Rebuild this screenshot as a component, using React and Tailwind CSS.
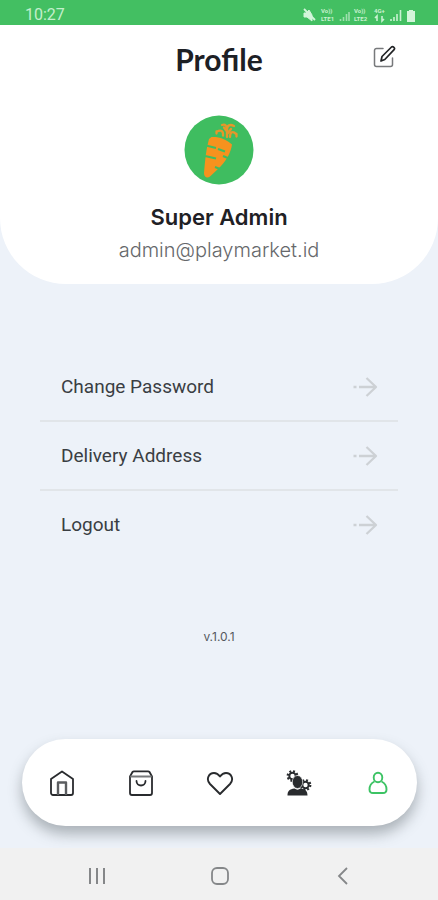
import React from "react";

function StatusIcons() {
  return (
    <svg className="h-5 w-[120px]" viewBox="0 0 120 20" fill="none" aria-hidden="true">
      <path d="M7 7l-3 3H2v4h3l5 4v-6z" fill="#d3f5da" stroke="#d3f5da" />
      <path d="M2 6l11 11" stroke="#d3f5da" strokeWidth="1.800" />
      <g fill="#c9f1d1" fontFamily="Roboto, sans-serif" fontSize="6" fontWeight="700">
        <text x="19" y="10">Vo))</text>
        <text x="19" y="18">LTE1</text>
        <text x="52" y="10">Vo))</text>
        <text x="52" y="18">LTE2</text>
        <text x="72" y="10">4G+</text>
      </g>
      <path d="M38.500 18v-2M41.500 18v-4M44.500 18v-7M47 18V9" stroke="#9fdfae" strokeWidth="1.600" />
      <path d="M75 18v-5l-2 2M80 13v5l2-2" stroke="#c9f2d2" strokeWidth="1.600" />
      <path d="M89 18v-2M92 18v-4M95 18v-7M98.500 18V7" stroke="#c9f2d2" strokeWidth="1.600" />
      <path d="M105 8h2V7h4v1h2v11h-8z" fill="#d3f5da" />
    </svg>
  );
}

function EditIcon() {
  return (
    <svg className="size-6" viewBox="0 0 24 24" fill="none" strokeLinecap="round" strokeLinejoin="round" aria-hidden="true">
      <path d="M11 3.500H4.500a2 2 0 0 0-2 2v14a2 2 0 0 0 2 2h14a2 2 0 0 0 2-2V13" stroke="#77797b" strokeWidth="1.500" />
      <path d="M9 16l1-4.500 9.500-9.500c1.500-1.200 4 1 2.600 2.700L12.800 14.500z" stroke="#222426" strokeWidth="1.700" />
    </svg>
  );
}

function Carrot() {
  return (
    <svg className="size-[70px]" viewBox="0 0 70 70" role="img" aria-label="Carrot">
      <circle cx="35" cy="35" r="34.500" fill="#3fbd60" />
      <path d="M27.500 22C35 21.500 42 24 48 29.500C47 38 41 48 34 54L26 61.500C23 64 20 62 20 58C21 46 22 34 25 24Z" fill="#f6921e" />
      <path d="M22 30.500l10 2.500M34 34l7 2.500M21 41l11 2.500M45 43.500l-6-2.500M31 52l5 2" fill="none" stroke="#3fbd60" strokeWidth="2" />
      <path d="M39 20.500C39.500 16 37 14.500 33 16.500M32.500 16.500v2M43 22V15c0-5-2-6-5-5M43 15c0-5 3-6 7-4M46 22c0-5 3-6.500 6-3M52.500 19v2.500M40 12.500l3 4M47 14l-3 4" fill="none" stroke="#e7962a" strokeWidth="2.300" strokeLinecap="round" />
    </svg>
  );
}

function ArrowIcon() {
  return (
    <svg className="h-6 w-[26px]" viewBox="0 0 26 24" fill="none" stroke="#cdd1d5" strokeWidth="2.300" aria-hidden="true">
      <path d="M1.500 12h3M7 12h17M14.500 3l9.500 9-9.500 9" strokeLinejoin="round" />
    </svg>
  );
}

function HomeIcon() {
  return (
    <svg className="size-7" viewBox="0 0 28 28" fill="none" stroke="#292b2e" strokeWidth="1.800" strokeLinejoin="round" aria-hidden="true">
      <path d="M3 10L14 2.500l11 7.500V24a2 2 0 0 1-2 2H5a2 2 0 0 1-2-2z" />
      <path d="M10 26V13.500h8V26" stroke="#5b5d60" strokeWidth="2.400" />
    </svg>
  );
}

function BagIcon() {
  return (
    <svg className="size-7" viewBox="0 0 28 28" fill="none" stroke="#292b2e" strokeWidth="1.800" strokeLinejoin="round" strokeLinecap="round" aria-hidden="true">
      <path d="M3 7.500V24a2 2 0 0 0 2 2h18a2 2 0 0 0 2-2V7.500L22.500 3a2 2 0 0 0-1.500-.6H7a2 2 0 0 0-1.500.6z" />
      <path d="M4 7.500h20" stroke="#77797b" />
      <path d="M9.500 12c0 6 9 6 9 0" />
    </svg>
  );
}

function HeartIcon() {
  return (
    <svg className="size-7" viewBox="0 0 28 28" fill="none" stroke="#292b2e" strokeWidth="1.900" strokeLinejoin="round" aria-hidden="true">
      <path d="M14 25L4 15C-.5 10 3 4 8 4c3 0 4.500 1.500 6 3.500C15.500 5.500 17 4 20 4c5 0 8.500 6 4 11z" />
    </svg>
  );
}

function ExpertIcon() {
  return (
    <svg className="size-7" viewBox="0 0 28 28" aria-hidden="true">
      <g fill="none" stroke="#292b2e">
        <circle cx="7.500" cy="7" r="3.200" strokeWidth="2" />
        <circle cx="7.500" cy="7" r="4.800" strokeWidth="2.200" strokeDasharray="1.900 1.870" />
        <circle cx="20.500" cy="16" r="3.200" strokeWidth="2" />
        <circle cx="20.500" cy="16" r="4.800" strokeWidth="2.200" strokeDasharray="1.900 1.870" />
      </g>
      <ellipse cx="12.500" cy="13" rx="5.200" ry="6.500" fill="#292b2e" stroke="#fff" strokeWidth=".6" />
      <path d="M2.500 26.500c0-4.500 2-6.500 7-7 2 1.500 4 1.500 6 0 5 .5 7 2.500 7 7z" fill="#292b2e" />
    </svg>
  );
}

function PersonIcon() {
  return (
    <svg className="size-7" viewBox="0 0 28 28" fill="none" stroke="#3cc364" strokeWidth="1.900" aria-hidden="true">
      <ellipse cx="14" cy="8.500" rx="4.300" ry="4.800" />
      <path d="M10.500 12.500C7 14 5.500 17.500 5.500 20.500c0 2.500 1.500 3.500 3.500 3.500h10c2 0 3.500-1 3.500-3.500 0-3-1.500-6.500-5-8" />
    </svg>
  );
}

const rows = ["Change Password", "Delivery Address", "Logout"];
const tabs = [
  { label: "Home", Icon: HomeIcon },
  { label: "Cart", Icon: BagIcon },
  { label: "Favourites", Icon: HeartIcon },
  { label: "Experts", Icon: ExpertIcon },
  { label: "Profile", Icon: PersonIcon },
];

export default function App() {
  return (
    <div className="flex min-h-screen flex-col bg-[#edf2f9] font-['Roboto',sans-serif] text-[#3a3e43]">
      <div className="flex h-[25px] items-center justify-between bg-[#43bf62] pr-4 pl-[25px]">
        <span className="pt-1 text-base leading-5 text-[#c3efcd]">10:27</span>
        <StatusIcons />
      </div>

      <header className="flex flex-col items-center rounded-b-[66px] bg-white pb-[22px]">
        <div className="grid w-full grid-cols-[1fr_auto_1fr] items-start px-[42px] pt-4">
          <h1 className="col-start-2 font-['Lato',sans-serif] text-[30px] leading-9 font-bold text-[#1d2025]">Profile</h1>
          <button type="button" aria-label="Edit profile" className="justify-self-end pt-1">
            <EditIcon />
          </button>
        </div>
        <div className="pt-[38px]">
          <Carrot />
        </div>
        <h2 className="mt-[18px] font-['Inter',sans-serif] text-[22px] leading-7 font-semibold text-[#1f2125]">Super Admin</h2>
        <p className="mt-[7px] font-['Inter',sans-serif] text-[20px] leading-6 font-light text-[#66686b]">admin@playmarket.id</p>
      </header>

      <main className="flex grow flex-col px-10 pt-[69px]">
        <ul className="divide-y-2 divide-[#e1e5e9]">
          {rows.map((label) => (
            <li key={label}>
              <button type="button" className="flex h-[67px] w-full items-center justify-between pr-5 pl-[21px] text-left text-[19px] leading-6">
                <span>{label}</span>
                <ArrowIcon />
              </button>
            </li>
          ))}
        </ul>
        <p className="mt-[69px] text-center font-['Inter',sans-serif] text-[12px] leading-5 text-[#55595e]">v.1.0.1</p>
      </main>

      <nav className="mr-[21px] mb-[22px] ml-[22px] grid h-[87px] grid-cols-5 rounded-full bg-white shadow-[0_8px_14px_rgba(70,80,85,0.4)]">
        {tabs.map(({ label, Icon }) => (
          <a key={label} href="#" aria-label={label} className="flex items-center justify-center">
            <Icon />
          </a>
        ))}
      </nav>

      <div className="flex h-[52px] items-center justify-between bg-[#f1f1f1] pt-1 pr-[81px] pl-[83px] text-[#858789]">
        <button type="button" aria-label="Recent apps">
          <svg className="size-7" viewBox="0 0 28 28" fill="none" stroke="currentColor" strokeWidth="2">
            <path d="M7 6v16M14 6v16M21 6v16" />
          </svg>
        </button>
        <button type="button" aria-label="Home screen">
          <svg className="size-7" viewBox="0 0 28 28" fill="none" stroke="currentColor" strokeWidth="1.800">
            <rect x="6" y="6" width="16" height="16" rx="5" />
          </svg>
        </button>
        <button type="button" aria-label="Back">
          <svg className="size-7" viewBox="0 0 28 28" fill="none" stroke="currentColor" strokeWidth="1.800">
            <path d="M18 6l-8 8 8 8" />
          </svg>
        </button>
      </div>
    </div>
  );
}
